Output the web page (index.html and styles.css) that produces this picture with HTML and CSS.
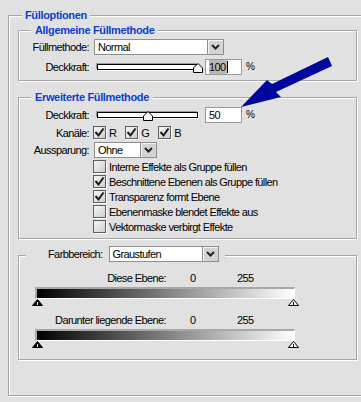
FILE: index.html
```html
<!DOCTYPE html>
<html lang="de">
<head>
    <meta charset="UTF-8">
    <meta name="viewport" content="width=device-width, initial-scale=1.0">
    <title>Fülloptionen</title>
    <link rel="stylesheet" href="styles.css">
</head>
<body>
    <div class="panel">
        <div class="panel-title">Fülloptionen</div>

        <section class="group general">
            <h2 class="group-title">Allgemeine Füllmethode</h2>
            <div class="form-grid">
                <span class="label">Füllmethode:</span>
                <div class="select select-blend">
                    <span class="select-value">Normal</span>
                    <span class="select-btn"><svg width="9" height="6" viewBox="0 0 9 6"><polyline points="1,1 4.5,4.5 8,1" fill="none" stroke="#222" stroke-width="2"/></svg></span>
                </div>

                <span class="label">Deckkraft:</span>
                <div class="opacity">
                    <div class="slider">
                        <div class="track"></div>
                        <svg class="thumb" style="left: 100%" width="10" height="10" viewBox="0 0 10 10"><path d="M5 0.5 L9.5 5 V9.5 H0.5 V5 Z" fill="#f4f4f4" stroke="#000"/></svg>
                    </div>
                    <div class="field"><span class="selected">100</span><span class="caret"></span></div>
                    <span class="unit">%</span>
                </div>
            </div>
        </section>

        <section class="group advanced">
            <h2 class="group-title">Erweiterte Füllmethode</h2>
            <div class="form-grid">
                <span class="label">Deckkraft:</span>
                <div class="opacity">
                    <div class="slider">
                        <div class="track"></div>
                        <svg class="thumb" style="left: 50%" width="10" height="10" viewBox="0 0 10 10"><path d="M5 0.5 L9.5 5 V9.5 H0.5 V5 Z" fill="#f4f4f4" stroke="#000"/></svg>
                    </div>
                    <div class="field">50</div>
                    <span class="unit">%</span>
                </div>

                <span class="label">Kanäle:</span>
                <div class="channels">
                    <label class="check"><span class="box"><svg width="11" height="11" viewBox="0 0 11 11"><polyline points="1.5,5 4.5,8.5 9.5,1.5" fill="none" stroke="#1a1a1a" stroke-width="2"/></svg></span>R</label>
                    <label class="check"><span class="box"><svg width="11" height="11" viewBox="0 0 11 11"><polyline points="1.5,5 4.5,8.5 9.5,1.5" fill="none" stroke="#1a1a1a" stroke-width="2"/></svg></span>G</label>
                    <label class="check"><span class="box"><svg width="11" height="11" viewBox="0 0 11 11"><polyline points="1.5,5 4.5,8.5 9.5,1.5" fill="none" stroke="#1a1a1a" stroke-width="2"/></svg></span>B</label>
                </div>

                <span class="label">Aussparung:</span>
                <div class="select select-knockout">
                    <span class="select-value">Ohne</span>
                    <span class="select-btn"><svg width="9" height="6" viewBox="0 0 9 6"><polyline points="1,1 4.5,4.5 8,1" fill="none" stroke="#222" stroke-width="2"/></svg></span>
                </div>

                <div class="options">
                    <label class="check"><span class="box"></span>Interne Effekte als Gruppe füllen</label>
                    <label class="check"><span class="box"><svg width="11" height="11" viewBox="0 0 11 11"><polyline points="1.5,5 4.5,8.5 9.5,1.5" fill="none" stroke="#1a1a1a" stroke-width="2"/></svg></span>Beschnittene Ebenen als Gruppe füllen</label>
                    <label class="check"><span class="box"><svg width="11" height="11" viewBox="0 0 11 11"><polyline points="1.5,5 4.5,8.5 9.5,1.5" fill="none" stroke="#1a1a1a" stroke-width="2"/></svg></span>Transparenz formt Ebene</label>
                    <label class="check"><span class="box"></span>Ebenenmaske blendet Effekte aus</label>
                    <label class="check"><span class="box"></span>Vektormaske verbirgt Effekte</label>
                </div>
            </div>
        </section>

        <section class="group range">
            <div class="range-title">
                <span>Farbbereich:</span>
                <div class="select select-range">
                    <span class="select-value">Graustufen</span>
                    <span class="select-btn"><svg width="9" height="6" viewBox="0 0 9 6"><polyline points="1,1 4.5,4.5 8,1" fill="none" stroke="#222" stroke-width="2"/></svg></span>
                </div>
            </div>

            <div class="blend">
                <div class="blend-row">
                    <span class="blend-label">Diese Ebene:</span>
                    <span>0</span>
                    <span>255</span>
                </div>
                <div class="bar"></div>
                <div class="markers">
                    <svg width="11" height="7" viewBox="0 0 11 7"><path d="M5.5 0.5 L10.5 6.5 H0.5 Z" fill="#000" stroke="#000"/><line x1="5.5" y1="3" x2="5.5" y2="6" stroke="#fff"/></svg>
                    <svg width="11" height="7" viewBox="0 0 11 7"><path d="M5.5 0.5 L10.5 6.5 H0.5 Z" fill="#fff" stroke="#000"/><line x1="5.5" y1="3" x2="5.5" y2="6" stroke="#000"/></svg>
                </div>

                <div class="blend-row second">
                    <span class="blend-label">Darunter liegende Ebene:</span>
                    <span>0</span>
                    <span>255</span>
                </div>
                <div class="bar"></div>
                <div class="markers">
                    <svg width="11" height="7" viewBox="0 0 11 7"><path d="M5.5 0.5 L10.5 6.5 H0.5 Z" fill="#000" stroke="#000"/><line x1="5.5" y1="3" x2="5.5" y2="6" stroke="#fff"/></svg>
                    <svg width="11" height="7" viewBox="0 0 11 7"><path d="M5.5 0.5 L10.5 6.5 H0.5 Z" fill="#fff" stroke="#000"/><line x1="5.5" y1="3" x2="5.5" y2="6" stroke="#000"/></svg>
                </div>
            </div>
        </section>
    </div>

    <svg class="arrow" width="100" height="60" viewBox="0 0 100 60">
        <polygon points="5,55 31,28 36,32 92,5 96,14 40,40 45,45" fill="#00079c"/>
    </svg>
</body>
</html>
```

FILE: styles.css
```css
* {
    box-sizing: border-box;
}
html, body {
    margin: 0;
}
body {
    position: relative;
    width: 361px;
    height: 402px;
    overflow: hidden;
    padding: 15px 0 0 8px;
    background-color: #e1e1e1;
    font: 11px/14px "Liberation Sans", Arial, sans-serif;
    letter-spacing: -0.6px;
    color: #000;
}

/* outer box runs off the right edge, so no right border */
.panel {
    width: 353px;
    border: 1px solid #a6a6a6;
    border-right: none;
    box-shadow: inset 1px 1px #fff, 0 1px #fff;
    padding-bottom: 35px;
}
.panel-title,
.group-title {
    width: fit-content;
    margin: -8px 0 0 13px;
    padding: 0 3px;
    background-color: #e1e1e1;
    color: #0a3fd8;
    font-size: 11px;
    font-weight: bold;
    line-height: 14px;
    letter-spacing: -0.35px;
}

.group {
    width: 339px;
    margin: 16px 0 0 9px;
    border: 1px solid #a6a6a6;
    box-shadow: inset 1px 1px #fff, 1px 1px #fff;
}
.group.general {
    margin-top: 8px;
}
.group-title {
    margin-left: 12px;
    padding: 0 4px;
}

.form-grid {
    display: grid;
    grid-template-columns: 70px auto;
    column-gap: 4px;
    align-items: center;
}
.general .form-grid {
    grid-auto-rows: 16px;
    row-gap: 4px;
    padding: 2px 0 5px;
}
.advanced .form-grid {
    grid-template-rows: 16px 17px 16px auto;
    row-gap: 1px;
    padding: 3px 0 4px;
}
.label {
    text-align: right;
}

.select {
    display: flex;
    height: 16px;
    margin-left: 1px;
    border: 1px solid #8f8f8f;
    background-color: #fff;
}
.select-value {
    flex: 1;
    padding-left: 3px;
    line-height: 14px;
}
.select-btn {
    width: 16px;
    display: flex;
    align-items: center;
    justify-content: center;
    border-left: 1px solid #8f8f8f;
    background-color: #d3d3d3;
    box-shadow: inset 1px 1px #f4f4f4;
}
.select-blend {
    width: 130px;
}
.select-knockout {
    width: 63px;
}
.select-range {
    width: 110px;
}

.opacity {
    display: flex;
    align-items: center;
    height: 16px;
}
.slider {
    position: relative;
    width: 101px;
    height: 16px;
    margin-left: 4px;
}
.track {
    height: 6px;
    margin-top: 5px;
    border: 1px solid #000;
    background-color: #fff;
    box-shadow: -1px -1px #9a9a9a, 1px 1px #fff;
}
.thumb {
    position: absolute;
    top: 4px;
    margin-left: -5px;
}
.field {
    width: 37px;
    height: 16px;
    margin-left: 7px;
    padding-left: 3px;
    display: flex;
    align-items: center;
    border: 1px solid #9a9a9a;
    background-color: #fff;
}
.selected {
    background-color: #b8b8b8;
    padding-right: 1px;
}
.caret {
    width: 1px;
    height: 12px;
    background-color: #000;
}
.unit {
    margin-left: 4px;
    font-size: 10px;
}

.check {
    display: flex;
    align-items: center;
    gap: 3px;
}
.box {
    width: 13px;
    height: 13px;
    display: flex;
    align-items: center;
    justify-content: center;
    border: 1px solid #5f5f5f;
    background: linear-gradient(135deg, #f6f6f6, #cdcdcd);
    box-shadow: 1px 1px #fff;
}
.channels {
    display: flex;
    gap: 9px;
}
.options {
    grid-column: 2;
    display: grid;
    grid-auto-rows: 15px;
    align-items: center;
}

.range-title {
    width: fit-content;
    height: 16px;
    margin: -10px 0 0 7px;
    padding: 0 6px 0 22px;
    display: flex;
    align-items: center;
    gap: 6px;
    background-color: #e1e1e1;
}
.range-title .select {
    margin-left: 0;
}

.blend {
    padding: 9px 0 11px;
}
.blend-row {
    display: grid;
    grid-template-columns: 171px 47px auto;
}
.blend-row.second {
    margin-top: 7px;
}
.blend-label {
    text-align: right;
    padding-right: 24px;
}
.bar {
    width: 260px;
    height: 12px;
    margin: 2px 0 0 16px;
    border-top: 2px solid #a8a8a8;
    border-left: 2px solid #a8a8a8;
    border-right: 1px solid #fff;
    border-bottom: 1px solid #fff;
    background: linear-gradient(to right, #000, #fff);
}
.markers {
    width: 267px;
    height: 7px;
    margin-left: 13px;
    display: flex;
    justify-content: space-between;
}
.markers svg {
    display: block;
}

.arrow {
    position: absolute;
    left: 236px;
    top: 52px;
}
```
